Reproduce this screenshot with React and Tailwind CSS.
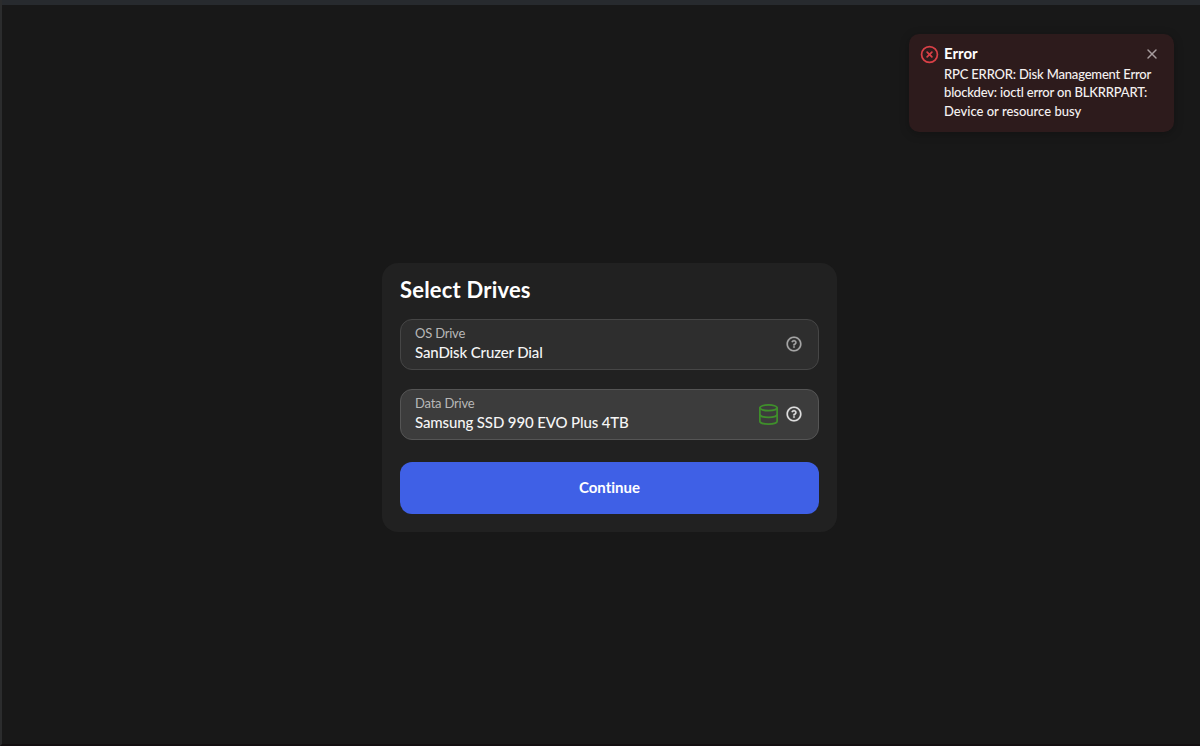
import { CircleX, Database, X } from "lucide-react";
import { RiQuestionLine } from "react-icons/ri";

const drives = [
  {
    label: "OS Drive",
    name: "SanDisk Cruzer Dial",
    box: "bg-[#2e2e2e] border-[#464646]",
    help: "text-[#a5a5a5]",
  },
  {
    label: "Data Drive",
    name: "Samsung SSD 990 EVO Plus 4TB",
    box: "bg-[#3c3c3c] border-[#555555]",
    help: "text-[#dedede]",
    isData: true,
  },
];

const DriveField = ({ drive }) => (
  <div
    className={`flex h-[51px] items-start justify-between rounded-xl border pt-[4px] pr-[15.5px] pl-[14px] ${drive.box}`}
  >
    <div>
      <p className="text-[13px] leading-[19px] tracking-[-0.22px] text-[#b8b8b8]">{drive.label}</p>
      <p className="text-[15px] leading-[18px] font-medium tracking-[-0.13px] text-[#f5f5f5]">
        {drive.name}
      </p>
    </div>
    <div className="flex h-[41px] items-center gap-[5px]">
      {drive.isData && <Database className="h-[23px] w-[23px] text-[#3f8f2b]" strokeWidth={1.8} />}
      <RiQuestionLine
        className={`mb-px h-[18px] w-[18px] stroke-current stroke-[0.3px] ${drive.help}`}
      />
    </div>
  </div>
);

const ErrorToast = () => (
  <div
    role="alert"
    className="absolute top-[34px] left-[907px] flex h-[98px] w-[265px] rounded-[10px] bg-[#2d1b1c] pt-[11px] pl-[11px] text-white shadow-[0_2px_10px_rgba(0,0,0,0.25)]"
  >
    <CircleX className="h-[19px] w-[19px] shrink-0 text-[#d94047]" strokeWidth={2.2} />
    <div className="ml-[5px]">
      <p className="-mt-px text-[15px] leading-[19px] font-bold">Error</p>
      <div className="mt-[1.5px] text-[13px] leading-[18.5px] font-medium whitespace-nowrap text-[#f5f1f1]">
        <p className="tracking-[-0.18px]">RPC ERROR: Disk Management Error</p>
        <p className="tracking-[-0.18px]">blockdev: ioctl error on BLKRRPART:</p>
        <p>Device or resource busy</p>
      </div>
    </div>
    <button aria-label="Close" className="absolute top-[12px] right-[14px] text-[#a69c9d]">
      <X className="h-4 w-4" strokeWidth={2.2} />
    </button>
  </div>
);

const App = () => (
  <div className="relative flex h-[746px] w-[1200px] flex-col overflow-hidden border-b-2 border-l-2 border-b-[#130f11] border-l-[#2b2c2d] bg-[#181818] font-['Lato',sans-serif] [font-variant-ligatures:none]">
    <div className="h-[5px] shrink-0 bg-[#272a2e]" />
    <ErrorToast />

    <main className="mt-[258px] ml-[380px] flex h-[269px] w-[455px] flex-col rounded-2xl bg-[#212121] px-[18px] pt-[12px]">
      <h1 className="text-[22px] leading-[29px] font-bold tracking-[0.2px] text-white">
        Select Drives
      </h1>
      <div className="mt-[15px] flex flex-col gap-[19px]">
        {drives.map((drive) => (
          <DriveField key={drive.label} drive={drive} />
        ))}
      </div>
      <button className="mt-[22px] h-[52px] rounded-xl bg-[#3f60e6] pb-[2px] text-[15px] font-bold text-white">
        Continue
      </button>
    </main>
  </div>
);

export default App;
